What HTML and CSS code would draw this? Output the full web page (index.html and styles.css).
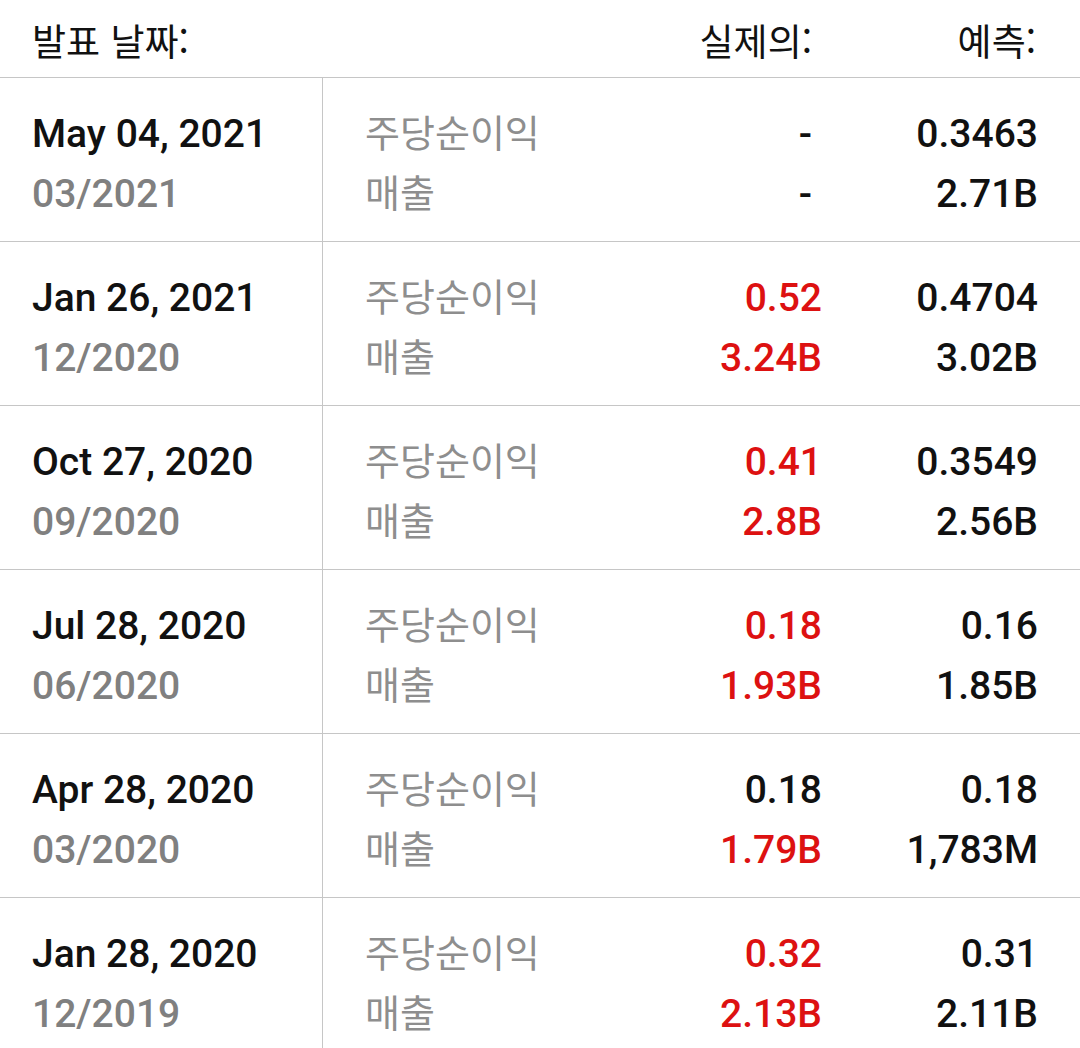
FILE: index.html
```html
<!DOCTYPE html>
<html lang="ko">
<head>
<meta charset="utf-8">
<link rel="stylesheet" href="styles.css">
</head>
<body>
<div class="table">
  <div class="head">
    <div class="h-date">발표 날짜:</div>
    <div class="h-actual">실제의:</div>
    <div class="h-fore">예측:</div>
  </div>

  <div class="row">
    <div class="date"><div class="d-main">May 04, 2021</div><div class="d-sub">03/2021</div></div>
    <div class="labels"><div>주당순이익</div><div>매출</div></div>
    <div class="actual"><div class="dash">-</div><div class="dash">-</div></div>
    <div class="fore"><div>0.3463</div><div>2.71B</div></div>
  </div>

  <div class="row">
    <div class="date"><div class="d-main">Jan 26, 2021</div><div class="d-sub">12/2020</div></div>
    <div class="labels"><div>주당순이익</div><div>매출</div></div>
    <div class="actual"><div class="red">0.52</div><div class="red">3.24B</div></div>
    <div class="fore"><div>0.4704</div><div>3.02B</div></div>
  </div>

  <div class="row">
    <div class="date"><div class="d-main">Oct 27, 2020</div><div class="d-sub">09/2020</div></div>
    <div class="labels"><div>주당순이익</div><div>매출</div></div>
    <div class="actual"><div class="red">0.41</div><div class="red">2.8B</div></div>
    <div class="fore"><div>0.3549</div><div>2.56B</div></div>
  </div>

  <div class="row">
    <div class="date"><div class="d-main">Jul 28, 2020</div><div class="d-sub">06/2020</div></div>
    <div class="labels"><div>주당순이익</div><div>매출</div></div>
    <div class="actual"><div class="red">0.18</div><div class="red">1.93B</div></div>
    <div class="fore"><div>0.16</div><div>1.85B</div></div>
  </div>

  <div class="row">
    <div class="date"><div class="d-main">Apr 28, 2020</div><div class="d-sub">03/2020</div></div>
    <div class="labels"><div>주당순이익</div><div>매출</div></div>
    <div class="actual"><div>0.18</div><div class="red">1.79B</div></div>
    <div class="fore"><div>0.18</div><div>1,783M</div></div>
  </div>

  <div class="row">
    <div class="date"><div class="d-main">Jan 28, 2020</div><div class="d-sub">12/2019</div></div>
    <div class="labels"><div>주당순이익</div><div>매출</div></div>
    <div class="actual"><div class="red">0.32</div><div class="red">2.13B</div></div>
    <div class="fore"><div>0.31</div><div>2.11B</div></div>
  </div>
</div>
</body>
</html>
```

FILE: styles.css
```css
html, body {
  margin: 0;
  padding: 0;
  background: #ffffff;
}
body {
  font-family: Roboto, "Noto Sans CJK KR", sans-serif;
  color: #111111;
  width: 1080px;
  height: 1048px;
  overflow: hidden;
}
.table {
  display: flex;
  flex-direction: column;
}
.head {
  display: grid;
  grid-template-columns: 1fr 240px 216px;
  height: 77px;
  border-bottom: 1px solid #c6c6c6;
  font-family: "Noto Sans CJK KR", Roboto, sans-serif;
  font-size: 37px;
  line-height: 80px;
  color: #111;
  box-sizing: content-box;
}
.h-date {
  padding-left: 32px;
}
.h-actual {
  text-align: right;
  padding-right: 52px;
}
.h-fore {
  text-align: right;
  padding-right: 44px;
}
.row {
  display: grid;
  grid-template-columns: 323px 1fr 240px 216px;
  height: 163px;
  border-bottom: 1px solid #c6c6c6;
  font-size: 39px;
  font-weight: 500;
  line-height: 60px;
  box-sizing: content-box;
}
.row > div {
  padding-top: 26px;
}
.date {
  border-right: 1px solid #c6c6c6;
  padding-left: 32px;
}
.d-main {
  color: #111;
}
.d-sub {
  color: #808080;
}
.labels {
  padding-left: 42px;
  color: #8e8e8e;
  font-size: 38px;
  font-weight: 400;
}
.actual {
  text-align: right;
  padding-right: 42px;
}
.fore {
  text-align: right;
  padding-right: 42px;
}
.red {
  color: #dd1111;
}
.dash {
  padding-right: 10px;
}
```
